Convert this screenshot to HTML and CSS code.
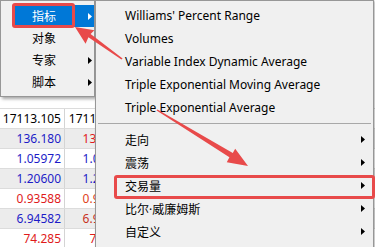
FILE: index.html
```html
<!DOCTYPE html>
<html lang="zh">
<head>
<meta charset="utf-8">
<link rel="stylesheet" href="styles.css">
</head>
<body>
<div class="screen">
  <div class="grid">
    <div class="row head"><div class="c1">17113.105</div><div class="c2">17113.105</div></div>
    <div class="row alt"><div class="c1 blue">136.180</div><div class="c2 red">136.245</div></div>
    <div class="row"><div class="c1 blue">1.05972</div><div class="c2 blue">1.05980</div></div>
    <div class="row alt"><div class="c1 blue">1.20600</div><div class="c2 blue">1.20611</div></div>
    <div class="row"><div class="c1 red">0.93588</div><div class="c2 orange">0.93601</div></div>
    <div class="row alt"><div class="c1 blue">6.94582</div><div class="c2 brown">6.94650</div></div>
    <div class="row"><div class="c1 red">74.285</div><div class="c2 red">74.301</div></div>
  </div>

  <div class="menu main">
    <div class="mitem active"><span>指标</span><svg class="tri" viewBox="0 0 4 7"><polygon points="0,0 4,3.5 0,7"/></svg></div>
    <div class="mitem"><span>对象</span></div>
    <div class="mitem"><span>专家</span><svg class="tri" viewBox="0 0 4 7"><polygon points="0,0 4,3.5 0,7"/></svg></div>
    <div class="mitem"><span>脚本</span><svg class="tri" viewBox="0 0 4 7"><polygon points="0,0 4,3.5 0,7"/></svg></div>
  </div>

  <div class="menu sub">
    <div class="sitem"><span>Williams' Percent Range</span></div>
    <div class="sitem"><span>Volumes</span></div>
    <div class="sitem"><span>Variable Index Dynamic Average</span></div>
    <div class="sitem"><span>Triple Exponential Moving Average</span></div>
    <div class="sitem"><span>Triple Exponential Average</span></div>
    <div class="sep"></div>
    <div class="sitem"><span>走向</span><svg class="tri" viewBox="0 0 4 7"><polygon points="0,0 4,3.5 0,7"/></svg></div>
    <div class="sitem"><span>震荡</span><svg class="tri" viewBox="0 0 4 7"><polygon points="0,0 4,3.5 0,7"/></svg></div>
    <div class="sitem"><span>交易量</span><svg class="tri" viewBox="0 0 4 7"><polygon points="0,0 4,3.5 0,7"/></svg></div>
    <div class="sitem"><span>比尔·威廉姆斯</span><svg class="tri" viewBox="0 0 4 7"><polygon points="0,0 4,3.5 0,7"/></svg></div>
    <div class="sitem"><span>自定义</span><svg class="tri" viewBox="0 0 4 7"><polygon points="0,0 4,3.5 0,7"/></svg></div>
  </div>

  <svg class="annot" viewBox="0 0 375 247" width="375" height="247">
    <rect x="13.5" y="4.5" width="60" height="22" rx="1.5" class="box"/>
    <rect x="115.5" y="176.5" width="258" height="21" rx="1.5" class="box"/>
    <polygon class="arr" points="75,27 94.4,30.3 90.6,33.9 122.6,58.4 121.4,59.6 88.4,37.3 85.6,43.7"/>
    <polygon class="arr" points="248,166 226.8,162.3 229.4,157.2 156.6,110.6 157.4,109.4 232.8,152.9 235.2,148.7"/>
  </svg>
</div>
</body>
</html>
```

FILE: styles.css
```css
html, body {
  margin: 0;
  padding: 0;
}
body {
  width: 375px;
  height: 247px;
  overflow: hidden;
  background: #f0f0f0;
  font-family: "Noto Sans", "Noto Sans CJK SC", sans-serif;
  font-size: 12px;
  color: #000;
}
.screen {
  position: relative;
  width: 375px;
  height: 247px;
  overflow: hidden;
  background: #ffffff;
}
.grid {
  display: flex;
  flex-direction: column;
  padding-top: 108px;
}
.row {
  display: flex;
  height: 20px;
  border-top: 1px solid #dcdcdc;
  box-sizing: border-box;
  background: #ffffff;
}
.row.alt {
  background: #ececec;
}
.row > div {
  line-height: 19px;
  text-align: right;
  box-sizing: border-box;
}
.c1 {
  width: 65px;
  padding-right: 3px;
  border-right: 1px solid #d4d4d4;
}
.c2 {
  width: 66px;
  padding-right: 3px;
  border-right: 1px solid #d4d4d4;
}
.blue { color: #1c1cc8; }
.red { color: #e01b1b; }
.orange { color: #e0421b; }
.brown { color: #c8321e; }

.menu {
  position: absolute;
  top: 0;
  background: #f0f0f0;
  border: 1px solid #979797;
  box-sizing: border-box;
}
.main {
  left: 0;
  width: 95px;
  height: 97px;
  padding-top: 4px;
  box-shadow: 2px 2px 3px rgba(0, 0, 0, 0.35);
}
.mitem {
  display: flex;
  align-items: center;
  justify-content: space-between;
  height: 22px;
  margin-left: 12px;
  padding-left: 19px;
  padding-right: 2px;
}
.mitem.active {
  background: #0078d7;
  color: #ffffff;
}
.mitem.active .tri polygon {
  fill: #ffffff;
}
.tri {
  width: 4px;
  height: 7px;
  flex: none;
}
.tri polygon {
  fill: #000;
}
.sub {
  left: 95px;
  width: 279px;
  height: 252px;
  padding-top: 3px;
  box-shadow: 1px 1px 2px rgba(0, 0, 0, 0.3);
}
.sitem {
  display: flex;
  align-items: center;
  justify-content: space-between;
  height: 23px;
  padding-left: 29px;
  padding-right: 8px;
}
.sep {
  height: 9px;
  margin: 0 2px;
  box-sizing: border-box;
  padding-top: 4px;
}
.sep::before {
  content: "";
  display: block;
  height: 1px;
  background: #a8a8a8;
}
.annot {
  position: absolute;
  left: 0;
  top: 0;
}
.box {
  fill: none;
  stroke: #e84a4a;
  stroke-width: 3;
}
.arr {
  fill: #e84a4a;
}
```
